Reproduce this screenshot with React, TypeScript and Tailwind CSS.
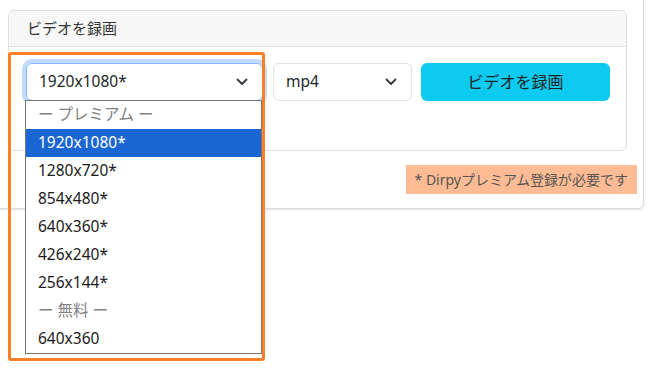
import { useState } from "react";

const options = [
  { label: "ー プレミアム ー", group: true },
  { label: "1920x1080*" },
  { label: "1280x720*" },
  { label: "854x480*" },
  { label: "640x360*" },
  { label: "426x240*" },
  { label: "256x144*" },
  { label: "ー 無料 ー", group: true },
  { label: "640x360" },
];

function Chevron() {
  return (
    <svg width="12" height="8" viewBox="0 0 12 8" fill="none" className="shrink-0">
      <path d="M1.5 1.5 6 6l4.5-4.5" stroke="#343a40" strokeWidth="1.8" strokeLinecap="round" strokeLinejoin="round" />
    </svg>
  );
}

export default function App() {
  const [selected] = useState(1);

  return (
    <div
      className="relative w-[656px] h-[368px] overflow-hidden bg-white text-[#212529]"
      style={{ fontFamily: '"Noto Sans", "Noto Sans CJK JP", sans-serif' }}
    >
      {/* outer card */}
      <div className="-ml-[10px] -mt-[10px] w-[654px] pt-[19px] pl-[17px] pr-[6px] pb-[14px] border border-[#dcdcdc] rounded-br-md bg-white shadow-[0_1px_3px_rgba(0,0,0,0.12)]">
        {/* inner card */}
        <div className="w-[619px] border border-[#dfdfdf] rounded-md bg-white">
          <div className="h-[36px] flex items-center px-[18px] bg-[#f7f7f7] border-b border-[#dfdfdf] rounded-t-md text-[15px] text-[#333]">
            ビデオを録画
          </div>
          <div className="flex items-center gap-[9px] pt-[16px] pb-[49px] pl-[17px]">
            <div className="w-[237px] h-[38px] flex items-center justify-between pl-[12px] pr-[14px] border border-[#86b7fe] rounded-md ring-4 ring-[#0d6efd]/25 text-[15.5px]">
              <span>1920x1080*</span>
              <Chevron />
            </div>
            <div className="ml-px w-[139px] h-[38px] flex items-center justify-between pl-[12px] pr-[14px] border border-[#dee2e6] rounded-md text-[15.5px]">
              <span>mp4</span>
              <Chevron />
            </div>
            <button className="w-[189px] h-[38px] rounded-md bg-[#0dcaf0] text-[16px] text-[#222]">
              ビデオを録画
            </button>
          </div>
        </div>
        <div className="flex justify-end mt-[14px]">
          <div className="h-[29px] flex items-center px-[9px] bg-[#ffbc94] text-[14px] text-[#555]">
            * Dirpyプレミアム登録が必要です
          </div>
        </div>
      </div>

      {/* open dropdown list */}
      <div className="absolute left-[25px] top-[100px] w-[237px] border border-[#767676] bg-white text-[15.5px]">
        {options.map((o, i) => (
          <div
            key={i}
            className={`h-[28px] flex items-center px-[12px] ${
              i === selected ? "bg-[#1a66d2] text-white" : o.group ? "text-[#808080]" : "text-[#1a1a1a]"
            }`}
          >
            {o.label}
          </div>
        ))}
      </div>

      {/* highlight frame */}
      <div className="absolute left-[8px] top-[52px] w-[257px] h-[309px] border-[3px] border-[#ff7f27] rounded-[3px]" />
    </div>
  );
}
